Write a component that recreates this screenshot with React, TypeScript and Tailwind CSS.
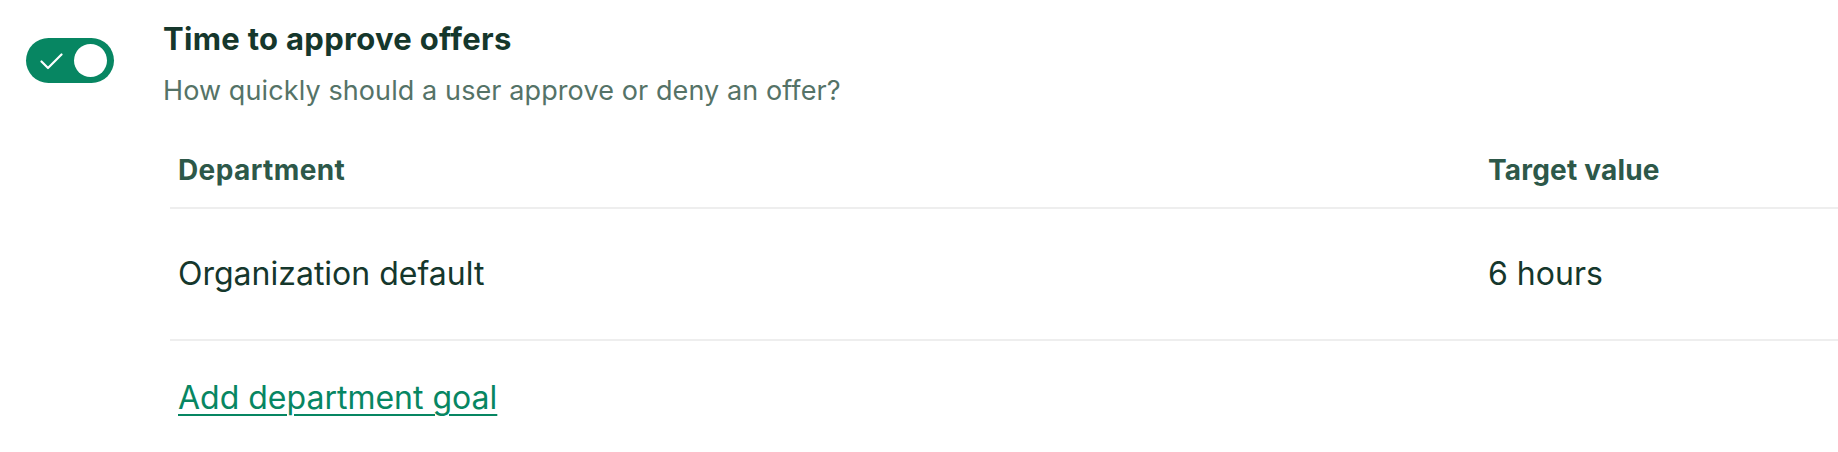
import React from 'react';

const rows = [{ department: 'Organization default', target: '6 hours' }];

function Toggle({ on }: { on: boolean }) {
  return (
    <button
      type="button"
      aria-pressed={on}
      className="relative flex h-[45px] w-[88px] shrink-0 items-center rounded-full bg-[#078662] pl-[14px] pr-[7px]"
    >
      <svg width="23" height="17" viewBox="0 0 23 17" fill="none" className="mt-[2px]">
        <path d="M1.5 8.5 L8 15 L21.5 1.5" stroke="#ffffff" strokeWidth="2.2" strokeLinecap="round" strokeLinejoin="round" />
      </svg>
      <span className="ml-auto block h-[33px] w-[33px] rounded-full bg-white" />
    </button>
  );
}

export default function App() {
  return (
    <div className="flex min-h-[452px] w-full bg-white font-['Inter','Liberation_Sans',sans-serif]">
      <div className="pl-[26px] pt-[38px]">
        <Toggle on />
      </div>
      <div className="ml-[49px] flex-1 pt-[21px]">
        <h2 className="text-[31px] font-bold leading-[36px] tracking-[0.3px] text-[#15372c]">Time to approve offers</h2>
        <p className="mt-[16px] text-[27px] leading-[36px] tracking-[0.1px] text-[#557367]">How quickly should a user approve or deny an offer?</p>

        <div className="ml-[7px] mt-[43px]">
          <div className="grid grid-cols-[1310px_1fr] border-b-2 border-[#eeeeee] pb-[19px] text-[28px] font-bold leading-[36px] tracking-[0.4px] text-[#2d5849]">
            <div className="pl-2">Department</div>
            <div className="pl-2 tracking-[0.2px]">Target value</div>
          </div>
          {rows.map(row => (
            <div key={row.department} className="grid h-[132px] grid-cols-[1310px_1fr] items-center border-b-2 border-[#eeeeee] text-[32px] text-[#15372c]">
              <div className="pl-2">{row.department}</div>
              <div className="pl-2">{row.target}</div>
            </div>
          ))}
          <div className="pl-2 pt-[39px]">
            <a href="#" className="text-[32px] leading-[36px] text-[#078662] underline decoration-2 underline-offset-[5px]">
              Add department goal
            </a>
          </div>
        </div>
      </div>
    </div>
  );
}
